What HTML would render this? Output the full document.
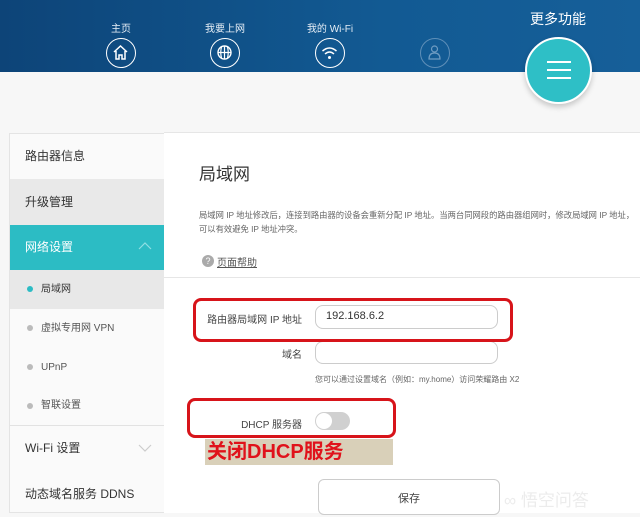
<!DOCTYPE html>
<html><head><meta charset="utf-8"><style>
*{margin:0;padding:0;box-sizing:border-box}
body{width:640px;height:513px;overflow:hidden;background:#f7f7f7;font-family:"Liberation Sans","Noto Sans CJK SC",sans-serif;position:relative;color:#333}
.hdr{position:absolute;left:0;top:0;width:640px;height:72px;background:linear-gradient(90deg,#0d4478,#125a93 60%,#165f99)}
.nav{position:absolute;color:#e6eef6;font-size:10px;text-align:center;width:80px}
.ic{position:absolute;width:30px;height:30px;border:1.5px solid #fff;border-radius:50%}
.more{position:absolute;left:530px;top:9px;color:#fff;font-size:14px}
.fab{position:absolute;left:525px;top:37px;width:67px;height:67px;border-radius:50%;background:#2ebfc6;border:2px solid #fff;box-shadow:0 3px 6px rgba(0,0,0,.2)}
.fab i{position:absolute;left:20px;width:24px;height:2px;background:#fff}
.side{position:absolute;left:9px;top:133px;width:155px;height:380px;background:#fafafa;border:1px solid #e4e4e4;border-right:none}
.it{position:absolute;left:0;width:154px;font-size:12px;padding-left:15px;color:#333}
.sub{font-size:10px;padding-left:31px;color:#555}
.dot{position:absolute;left:17px;width:6px;height:6px;border-radius:50%;background:#bbb}
.main{position:absolute;left:164px;top:132px;width:476px;height:381px;background:#fff;border-top:1px solid #e6e6e6}
.abs{position:absolute}
.lbl{position:absolute;left:10px;width:128px;text-align:right;font-size:10px;color:#444;white-space:nowrap}
.inp{position:absolute;border:1px solid #ccc;border-radius:8px;background:#fff}
.red{position:absolute;border:3px solid #d7141a;border-radius:8px}
</style></head><body>
<div class="hdr">
 <div class="nav" style="left:81px;top:20px">主页</div>
 <div class="nav" style="left:185px;top:20px">我要上网</div>
 <div class="nav" style="left:290px;top:20px">我的 Wi-Fi</div>
 <div class="ic" style="left:106px;top:38px"><svg width="27" height="27" viewBox="0 0 27 27"><path d="M7 13 L13.5 7 L20 13 M9 12 V20 H12 V16 H15 V20 H18 V12" fill="none" stroke="#fff" stroke-width="1.5"/></svg></div>
 <div class="ic" style="left:210px;top:38px"><svg width="27" height="27" viewBox="0 0 27 27"><circle cx="13.5" cy="13.5" r="6.5" fill="none" stroke="#fff" stroke-width="1.4"/><path d="M7 13.5H20M13.5 7V20M10.5 8Q9 13.5 10.5 19M16.5 8Q18 13.5 16.5 19" fill="none" stroke="#fff" stroke-width="1.2"/></svg></div>
 <div class="ic" style="left:315px;top:38px"><svg width="27" height="27" viewBox="0 0 27 27"><path d="M6.5 12Q13.5 6 20.5 12M9 15Q13.5 11 18 15" fill="none" stroke="#fff" stroke-width="1.5"/><circle cx="13.5" cy="18.5" r="1.5" fill="#fff"/></svg></div>
 <div class="ic" style="left:420px;top:38px;border-color:#5f8fb8"><svg width="27" height="27" viewBox="0 0 27 27"><circle cx="13.5" cy="10" r="3" fill="none" stroke="#6f9cc2" stroke-width="1.2"/><path d="M8 20Q8 14 13.5 14Q19 14 19 20Z" fill="none" stroke="#6f9cc2" stroke-width="1.2"/></svg></div>
 <div class="more">更多功能</div>
</div>
<div class="fab"><i style="top:22px"></i><i style="top:30px"></i><i style="top:38px"></i></div>

<div class="side">
 <div class="it" style="top:0;height:45px;line-height:45px">路由器信息</div>
 <div class="it" style="top:45px;height:46px;line-height:46px;background:#e9e9e9">升级管理</div>
 <div class="it" style="top:91px;height:45px;line-height:45px;background:#2cbcc4;color:#fff">网络设置<svg style="position:absolute;right:12px;top:17px" width="14" height="8"><path d="M1 7L7 1L13 7" fill="none" stroke="#8fdfe3" stroke-width="1.2"/></svg></div>
 <div class="it sub" style="top:136px;height:39px;line-height:39px;background:#e8e8e8;color:#333"><span class="dot" style="top:16px;background:#2cbcc4"></span>局域网</div>
 <div class="it sub" style="top:175px;height:39px;line-height:39px"><span class="dot" style="top:16px"></span>虚拟专用网 VPN</div>
 <div class="it sub" style="top:214px;height:39px;line-height:39px"><span class="dot" style="top:16px"></span>UPnP</div>
 <div class="it sub" style="top:253px;height:38px;line-height:38px"><span class="dot" style="top:16px"></span>智联设置</div>
 <div class="abs" style="left:0;top:291px;width:154px;border-top:1px solid #e2e2e2"></div>
 <div class="it" style="top:291px;height:46px;line-height:46px">Wi-Fi 设置<svg style="position:absolute;right:12px;top:19px" width="14" height="8"><path d="M1 1L7 7L13 1" fill="none" stroke="#ccc" stroke-width="1.2"/></svg></div>
 <div class="it" style="top:337px;height:46px;line-height:46px">动态域名服务 DDNS</div>
</div>

<div class="main">
 <div class="abs" style="left:35px;top:27px;font-size:17px;color:#333">局域网</div>
 <div class="abs" style="left:35px;top:75px;font-size:8.3px;color:#666;line-height:14px;white-space:nowrap">局域网 IP 地址修改后，连接到路由器的设备会重新分配 IP 地址。当两台同网段的路由器组网时，修改局域网 IP 地址，<br>可以有效避免 IP 地址冲突。</div>
 <div class="abs" style="left:38px;top:122px;width:12px;height:12px;border-radius:50%;background:#aaa;color:#fff;font-size:9px;text-align:center;line-height:12px">?</div>
 <div class="abs" style="left:53px;top:121px;font-size:10px;color:#555;text-decoration:underline">页面帮助</div>
 <div class="abs" style="left:0;top:144px;width:476px;border-top:1px solid #e6e6e6"></div>

 <div class="lbl" style="top:178px">路由器局域网 IP 地址</div>
 <div class="inp" style="left:151px;top:172px;width:183px;height:24px"></div>
 <div class="abs" style="left:162px;top:177px;font-size:11px;color:#333">192.168.6.2</div>
 <div class="lbl" style="top:213px">域名</div>
 <div class="inp" style="left:151px;top:208px;width:183px;height:23px"></div>
 <div class="abs" style="left:151px;top:241px;font-size:8px;color:#666">您可以通过设置域名（例如：my.home）访问荣耀路由 X2</div>
 <div class="lbl" style="top:283px">DHCP 服务器</div>
 <div class="abs" style="left:151px;top:279px;width:35px;height:18px;border-radius:9px;background:#d0d0d0"><div style="position:absolute;left:1px;top:1px;width:16px;height:16px;border-radius:50%;background:#fff"></div></div>

 <div class="red" style="left:29px;top:165px;width:320px;height:44px"></div>
 <div class="red" style="left:23px;top:265px;width:209px;height:40px"></div>
 <div class="abs" style="left:41px;top:306px;width:188px;height:26px;background:#d9d0b9"></div>
 <div class="abs" style="left:43px;top:306px;font-size:20px;font-weight:bold;color:#e0121b;line-height:26px">关闭DHCP服务</div>

 <div class="inp" style="left:154px;top:346px;width:182px;height:36px;border-radius:6px"></div>
 <div class="abs" style="left:154px;top:357px;width:182px;text-align:center;font-size:11px;color:#444">保存</div>
 <div class="abs" style="left:340px;top:353px;font-size:17px;color:#ececec">∞ 悟空问答</div>
</div>
</body></html>
